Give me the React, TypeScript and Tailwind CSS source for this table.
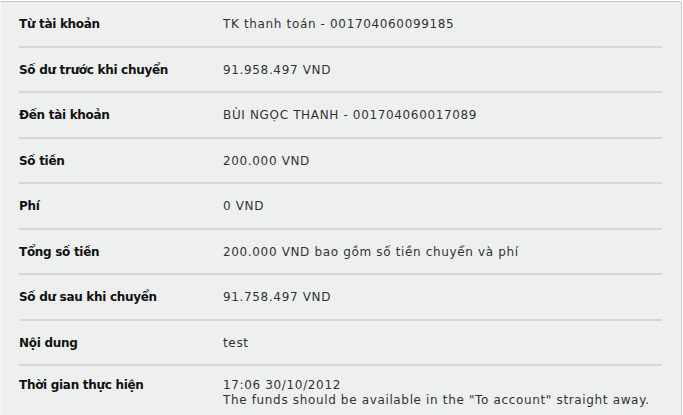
const rows: { label: string; value: string[] }[] = [
  { label: "Từ tài khoản", value: ["TK thanh toán - 001704060099185"] },
  { label: "Số dư trước khi chuyển", value: ["91.958.497 VND"] },
  { label: "Đến tài khoản", value: ["BÙI NGỌC THANH - 001704060017089"] },
  { label: "Số tiền", value: ["200.000 VND"] },
  { label: "Phí", value: ["0 VND"] },
  { label: "Tổng số tiền", value: ["200.000 VND bao gồm số tiền chuyển và phí"] },
  { label: "Số dư sau khi chuyển", value: ["91.758.497 VND"] },
  { label: "Nội dung", value: ["test"] },
];

export default function App() {
  return (
    <div className="w-[683px] h-[415px] overflow-hidden bg-white">
      <div
        className="mt-[1px] w-[682px] h-[414px] bg-[#eef0ef] border-t border-r border-l border-t-[#c4c4c4] border-r-[#c9c9c9] border-l-[#f6f6f6] rounded-tr-[3px] pl-[18px] pr-[19px]"
        style={{ fontFamily: '"DejaVu Sans", Verdana, sans-serif' }}
      >
        {rows.map((r) => (
          <div
            key={r.label}
            className="h-[45.5px] flex items-center pt-[2px] border-b-2 border-[#d6d8d7] text-[12px] leading-[15px]"
          >
            <div className="w-[204px] font-bold text-[#111] tracking-[-0.3px]">{r.label}</div>
            <div className="text-[#333] tracking-[0.65px]">{r.value[0]}</div>
          </div>
        ))}
        <div className="flex pt-[12px] text-[12px] leading-[15px]">
          <div className="w-[204px] font-bold text-[#111] tracking-[-0.3px]">Thời gian thực hiện</div>
          <div className="text-[#333] tracking-[0.65px]">
            <div>17:06 30/10/2012</div>
            <div>The funds should be available in the "To account" straight away.</div>
          </div>
        </div>
      </div>
    </div>
  );
}
